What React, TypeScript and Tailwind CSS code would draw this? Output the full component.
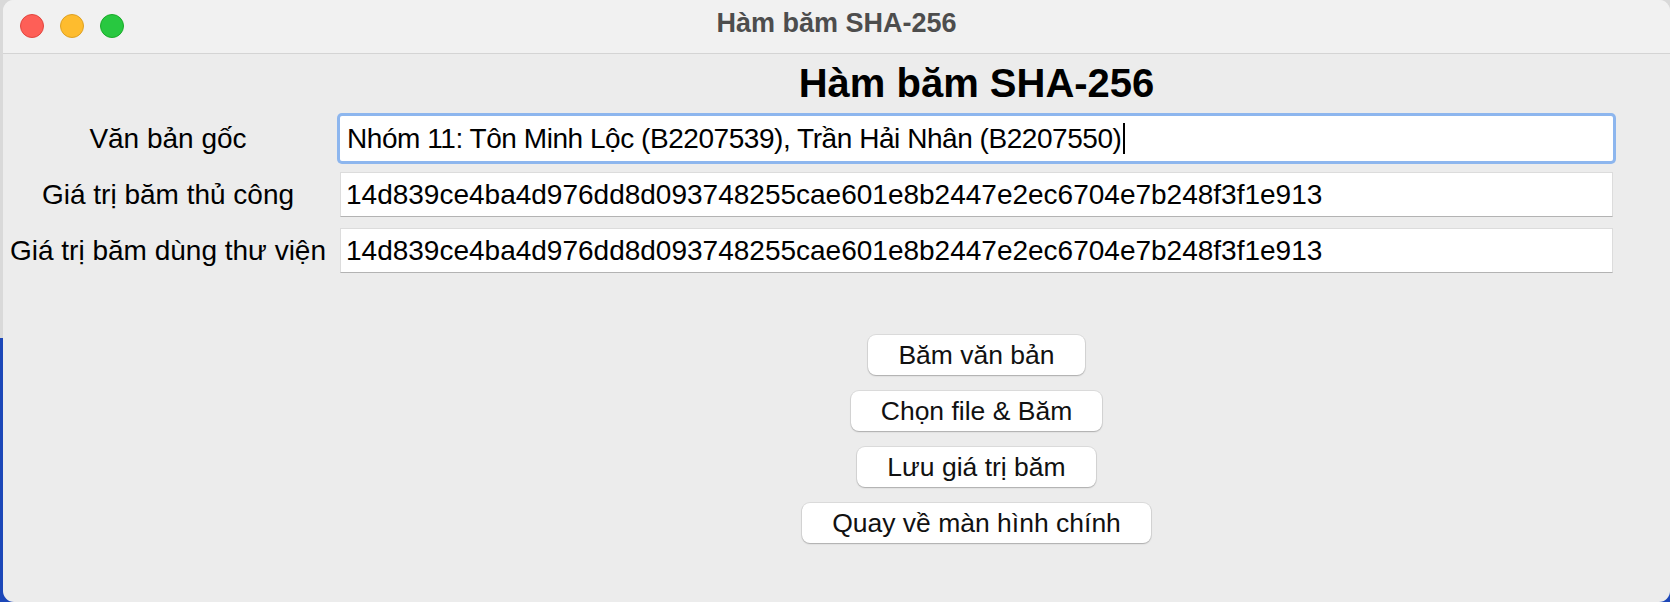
import React from "react";

const HASH = "14d839ce4ba4d976dd8d093748255cae601e8b2447e2ec6704e7b248f3f1e913";

function Row({ label, children }: { label: string; children: React.ReactNode }) {
  return (
    <div className="flex items-center">
      <div className="w-[330px] text-center text-[28px] leading-none text-black whitespace-nowrap">{label}</div>
      <div className="ml-[7px] w-[1273px]">{children}</div>
    </div>
  );
}

function Btn({ children }: { children: React.ReactNode }) {
  return (
    <button className="h-[40px] px-[30px] rounded-[8px] bg-white text-[26.5px] leading-none text-[#111] shadow-[0_0_0_1px_rgba(0,0,0,0.07),0_1px_1.5px_rgba(0,0,0,0.22)] whitespace-nowrap">
      {children}
    </button>
  );
}

export default function App() {
  return (
    <div className="w-[1670px] h-[602px] overflow-hidden flex bg-[linear-gradient(to_bottom,#d9d9d9_338px,#1c47b8_338px)] font-['Liberation_Sans',Arial,sans-serif]">
      <div className="ml-[3px] flex-1 h-[602px] rounded-[11px] overflow-hidden flex flex-col bg-[#ececec]">
        {/* title bar */}
        <div className="relative h-[54px] shrink-0 bg-[#f1f1f1] border-b border-[#d4d4d4] flex justify-center">
          <div className="absolute left-[17px] top-[14px] flex gap-[16px]">
            <div className="w-[24px] h-[24px] rounded-full bg-[#fe5f57] border border-[#e2463f]" />
            <div className="w-[24px] h-[24px] rounded-full bg-[#febc2e] border border-[#dea123]" />
            <div className="w-[24px] h-[24px] rounded-full bg-[#28c840] border border-[#1aab29]" />
          </div>
          <div className="pt-[10px] text-[27px] leading-none font-bold text-[#4d4d4d]">Hàm băm SHA-256</div>
        </div>
        {/* body */}
        <div className="flex flex-col pt-[9px]">
          <div className="ml-[337px] w-[1273px] text-center text-[40px] leading-none font-bold text-black mb-[13px]">
            Hàm băm SHA-256
          </div>
          <div className="flex flex-col gap-[11px]">
            <Row label="Văn bản gốc">
              <div className="h-[45px] bg-white rounded-[2px] shadow-[0_0_0_3px_#8db6ee] flex items-center pl-[7px] text-[28px] leading-none text-black whitespace-nowrap">
                <span className="tracking-[-0.45px]">Nhóm 11: Tôn Minh Lộc (B2207539), Trần Hải Nhân (B2207550)</span>
                <span className="ml-[2px] inline-block w-[2px] h-[31px] bg-black" />
              </div>
            </Row>
            <Row label="Giá trị băm thủ công">
              <div className="h-[45px] bg-white border border-[#dcdcdc] border-b-[#b3b3b3] flex items-center pl-[5px] text-[28px] leading-none text-black whitespace-nowrap">
                {HASH}
              </div>
            </Row>
            <Row label="Giá trị băm dùng thư viện">
              <div className="h-[45px] bg-white border border-[#dcdcdc] border-b-[#b3b3b3] flex items-center pl-[5px] text-[28px] leading-none text-black whitespace-nowrap">
                {HASH}
              </div>
            </Row>
          </div>
          <div className="ml-[337px] w-[1273px] mt-[62px] flex flex-col items-center gap-[16px]">
            <Btn>Băm văn bản</Btn>
            <Btn>Chọn file &amp; Băm</Btn>
            <Btn>Lưu giá trị băm</Btn>
            <Btn>Quay về màn hình chính</Btn>
          </div>
        </div>
      </div>
    </div>
  );
}
